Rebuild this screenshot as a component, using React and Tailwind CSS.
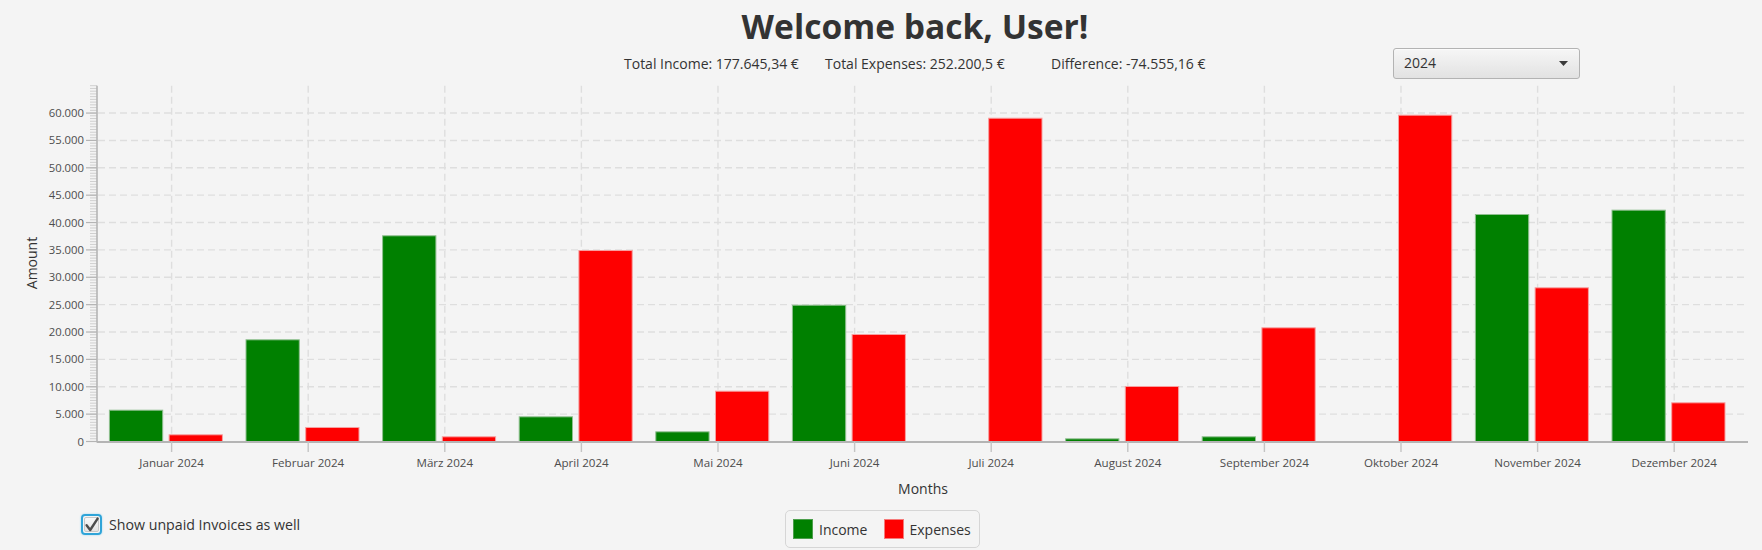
import React from "react";

const months = [
  "Januar 2024",
  "Februar 2024",
  "März 2024",
  "April 2024",
  "Mai 2024",
  "Juni 2024",
  "Juli 2024",
  "August 2024",
  "September 2024",
  "Oktober 2024",
  "November 2024",
  "Dezember 2024",
];
const income = [5810, 18670, 37670, 4600, 1860, 24990, 0, 580, 950, 0, 41560, 42350];
const expenses = [1315, 2650, 950, 34980, 9280, 19640, 59150, 10140, 20860, 59700, 28170, 7160];

const Y0 = 441.5;
const PPU = 27.37 / 5000;
const yFor = (v) => Y0 - v * PPU;
const X_LEFT = 97;
const X_RIGHT = 1748;
const TOP = yFor(65000);
const cx = (i) => 171.6 + 136.6 * i;
const BAR_W = 54.3;

function fmt(v) {
  if (v === 0) return "0";
  const s = String(v);
  return s.slice(0, s.length - 3) + "." + s.slice(s.length - 3);
}

function Chart() {
  const majors = [];
  for (let v = 0; v <= 60000; v += 5000) majors.push(v);
  const minors = [];
  for (let v = 0; v <= 65000; v += 500) minors.push(v);

  return (
    <svg width="1762" height="426" viewBox="0 79 1762 426" className="block">
      {majors
        .filter((v) => v > 0)
        .map((v) => (
          <line
            key={"h" + v}
            x1={X_LEFT + 1}
            x2={X_RIGHT}
            y1={yFor(v)}
            y2={yFor(v)}
            stroke="#dedede"
            strokeWidth="1.4"
            strokeDasharray="7 4"
          />
        ))}
      {months.map((m, i) => (
        <line
          key={"v" + i}
          x1={cx(i)}
          x2={cx(i)}
          y1={TOP}
          y2={Y0}
          stroke="#dedede"
          strokeWidth="1.4"
          strokeDasharray="7 4"
        />
      ))}
      {months.map((m, i) => {
        const gi = income[i];
        const ex = expenses[i];
        const gx = cx(i) - 62.7;
        const rx = cx(i) - 3.0;
        return (
          <g key={"b" + i}>
            {gi > 0 && (
              <rect
                x={gx + 0.5}
                y={yFor(gi) + 0.5}
                width={BAR_W - 1}
                height={Y0 - yFor(gi)}
                fill="#008000"
                stroke="#8fbf8f"
                strokeWidth="1"
              />
            )}
            {ex > 0 && (
              <rect
                x={rx + 0.5}
                y={yFor(ex) + 0.5}
                width={BAR_W - 1}
                height={Y0 - yFor(ex)}
                fill="#fe0000"
                stroke="#f7a0a0"
                strokeWidth="1"
              />
            )}
          </g>
        );
      })}
      {minors.map((v) => (
        <line
          key={"mi" + v}
          x1={90}
          x2={97}
          y1={yFor(v)}
          y2={yFor(v)}
          stroke="#cfcfcf"
          strokeWidth="1"
        />
      ))}
      {majors.map((v) => (
        <g key={"ma" + v}>
          <line x1={86} x2={97} y1={yFor(v)} y2={yFor(v)} stroke="#b4b4b4" strokeWidth="1.2" />
          <text x={84} y={yFor(v) + 4} textAnchor="end" fontSize="11.3" fill="#4d4d4d">
            {fmt(v)}
          </text>
        </g>
      ))}
      <line x1={97} x2={97} y1={TOP} y2={Y0 + 1} stroke="#b4b4b4" strokeWidth="1.6" />
      <line x1={97} x2={X_RIGHT} y1={Y0 + 0.5} y2={Y0 + 0.5} stroke="#b4b4b4" strokeWidth="1.8" />
      {months.map((m, i) => (
        <g key={"x" + i}>
          <line x1={cx(i)} x2={cx(i)} y1={Y0} y2={452} stroke="#c4c4c4" strokeWidth="1.4" />
          <text x={cx(i)} y={467.3} textAnchor="middle" fontSize="11.6" fill="#4d4d4d">
            {m}
          </text>
        </g>
      ))}
      <text x={923} y={494} textAnchor="middle" fontSize="14" fill="#333333">
        Months
      </text>
      <text
        x={0}
        y={0}
        transform="translate(37 263) rotate(-90)"
        textAnchor="middle"
        fontSize="14"
        fill="#333333"
      >
        Amount
      </text>
    </svg>
  );
}

export default function App() {
  return (
    <div className="w-[1762px] h-[550px] overflow-hidden bg-[#f4f4f4] font-['Open_Sans',sans-serif] text-[#333333]">
      <div className="h-[47px] pt-[3px] pl-[68px] text-center text-[33.6px] font-bold leading-[46px] whitespace-nowrap">
        Welcome back, User!
      </div>
      <div className="h-[32px] flex items-center text-[14px] leading-[20px] whitespace-nowrap">
        <div className="ml-[624px] w-[201px] pt-[1px]">Total Income: 177.645,34 €</div>
        <div className="w-[226px] pt-[1px]">Total Expenses: 252.200,5 €</div>
        <div className="w-[342px] pt-[1px]">Difference: -74.555,16 €</div>
        <div className="w-[187px] h-[31px] rounded-[3px] border border-[#b3b3b3] bg-linear-to-b from-[#f6f6f6] to-[#e2e2e2] flex items-center justify-between pl-[10px] pr-[11px] shadow-[inset_0_1px_0_#fbfbfb]">
          <span className="text-[14px] text-[#333333]">2024</span>
          <svg width="9" height="5" viewBox="0 0 9 5">
            <polygon points="0,0 9,0 4.5,5" fill="#3a3a3a" />
          </svg>
        </div>
      </div>
      <Chart />
      <div className="flex items-start pl-[81px]">
        <div className="w-[704px] flex items-center mt-[9px]">
          <div className="relative w-[21px] h-[21px] rounded-[4px] border-2 border-[#2fa4d8] p-[1px] shadow-[0_0_2px_#8fd0ee]">
            <div className="w-full h-full rounded-[2px] border border-[#c8c8c8] bg-linear-to-b from-[#f8f8f8] to-[#e4e4e4]" />
            <svg className="absolute left-[1px] top-[0px]" width="16" height="17" viewBox="0 0 16 17">
              <path d="M2.6 9.2 L6.2 14 L13.6 2.6" fill="none" stroke="#4d4d4d" strokeWidth="2.4" strokeLinecap="round" strokeLinejoin="round" />
            </svg>
          </div>
          <span className="ml-[7px] text-[14.2px] leading-[20px] whitespace-nowrap">Show unpaid Invoices as well</span>
        </div>
        <div className="mt-[5px] h-[38px] flex items-center rounded-[5px] border border-[#d6d6d6] pl-[7px] pr-[8px] text-[14px] whitespace-nowrap">
          <div className="w-[20px] h-[20px] bg-[#008000] border border-[#4c9f4c]" />
          <span className="ml-[6px]">Income</span>
          <div className="ml-[17px] w-[20px] h-[20px] bg-[#fe0000] border border-[#f57a7a]" />
          <span className="ml-[5px]">Expenses</span>
        </div>
      </div>
    </div>
  );
}
